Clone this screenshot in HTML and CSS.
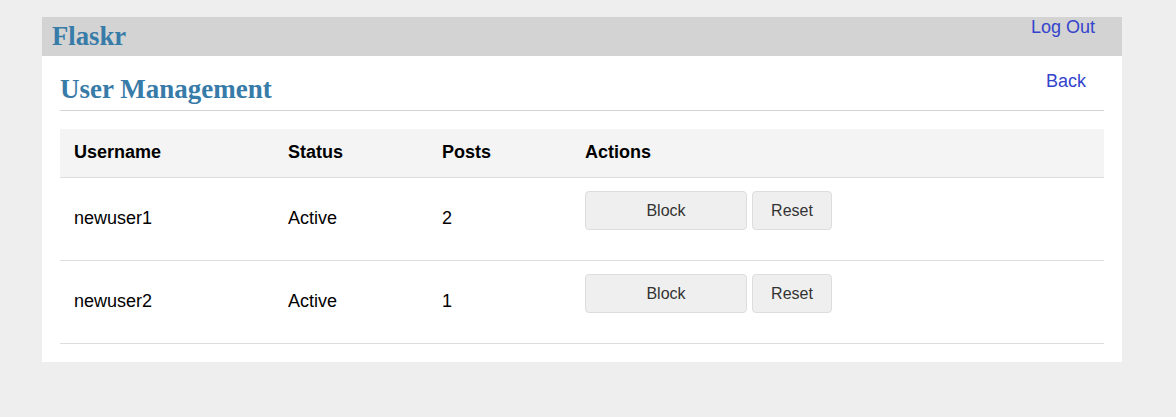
FILE: index.html
```html
<!DOCTYPE html>
<html>
<head>
<meta charset="utf-8">
<title>Flaskr - User Management</title>
<link rel="stylesheet" href="styles.css">
</head>
<body>
<div class="page">
  <nav class="topnav">
    <h1 class="brand">Flaskr</h1>
    <a class="logout" href="#">Log Out</a>
  </nav>
  <section class="content">
    <header class="content-header">
      <h1 class="title">User Management</h1>
      <a class="action" href="#">Back</a>
    </header>
    <table class="users">
      <thead>
        <tr>
          <th class="c-user">Username</th>
          <th class="c-status">Status</th>
          <th class="c-posts">Posts</th>
          <th class="c-actions">Actions</th>
        </tr>
      </thead>
      <tbody>
        <tr>
          <td>newuser1</td>
          <td>Active</td>
          <td>2</td>
          <td class="actions"><div class="btns"><button class="btn btn-block">Block</button><button class="btn btn-reset">Reset</button></div></td>
        </tr>
        <tr>
          <td>newuser2</td>
          <td>Active</td>
          <td>1</td>
          <td class="actions"><div class="btns"><button class="btn btn-block">Block</button><button class="btn btn-reset">Reset</button></div></td>
        </tr>
      </tbody>
    </table>
  </section>
</div>
</body>
</html>
```
FILE: styles.css
```css
html, body {
  margin: 0;
  padding: 0;
}
body {
  background: #eeeeee;
  font-family: "Liberation Sans", Arial, sans-serif;
  font-size: 18px;
  color: #000;
}
.page {
  width: 1080px;
  margin: 17px 0 0 42px;
  background: #ffffff;
}
.topnav {
  background: #d3d3d3;
  display: flex;
  align-items: center;
  height: 39px;
  padding: 0 27px 0 10px;
}
.brand {
  flex: auto;
  margin: 0;
  font-family: "Liberation Serif", "Times New Roman", serif;
  font-size: 26.7px;
  font-weight: bold;
  color: #377ba8;
}
.logout {
  align-self: flex-start;
  padding-top: 0;
  color: #3344cc;
  text-decoration: none;
}
.content {
  padding: 0 18px 18px;
}
.content-header {
  display: flex;
  align-items: flex-end;
  border-bottom: 1px solid #d3d3d3;
}
.title {
  flex: auto;
  margin: 18px 0 5px 0;
  font-family: "Liberation Serif", "Times New Roman", serif;
  font-size: 27px;
  font-weight: bold;
  color: #377ba8;
}
.action {
  align-self: flex-start;
  padding: 15px 18px 0 0;
  color: #3344cc;
  text-decoration: none;
}
.users {
  width: 100%;
  margin-top: 18px;
  border-collapse: collapse;
}
.users th {
  background: #f4f4f4;
  height: 48px;
  padding: 0 14px;
  text-align: left;
  font-weight: bold;
  border-bottom: 1px solid #dddddd;
  box-sizing: border-box;
}
.c-user { width: 214px; }
.c-status { width: 154px; }
.c-posts { width: 143px; }
.users td {
  box-sizing: border-box;
  height: 83px;
  padding: 0 14px;
  border-bottom: 1px solid #dddddd;
  vertical-align: middle;
}
.users td.actions {
  vertical-align: top;
  padding-top: 13px;
}
.btns {
  display: flex;
  gap: 5px;
}
.btn {
  height: 39px;
  background: #efefef;
  border: 1px solid #dddddd;
  border-radius: 4px;
  font-family: "Liberation Sans", Arial, sans-serif;
  font-size: 16px;
  color: #333333;
  padding: 2px 0 0 0;
}
.btn-block { width: 162px; }
.btn-reset { width: 80px; }
```
